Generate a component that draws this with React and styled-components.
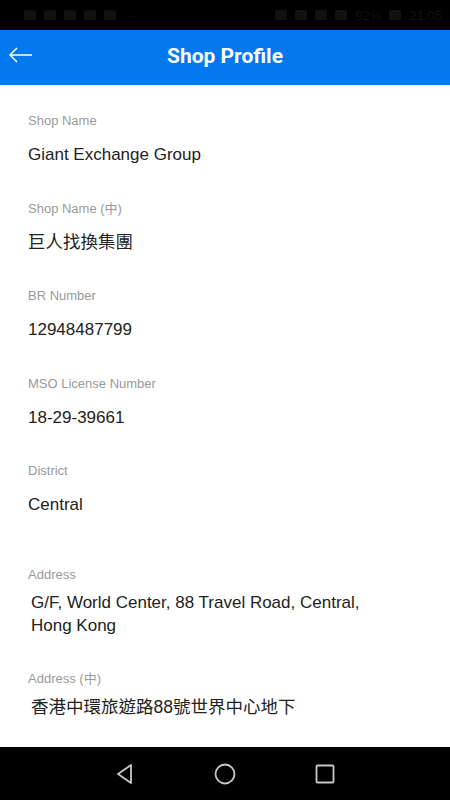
import styled, { createGlobalStyle } from "styled-components";

const fields = [
  { label: "Shop Name", value: "Giant Exchange Group" },
  { label: "Shop Name (中)", value: "巨人找換集團", cjk: true },
  { label: "BR Number", value: "12948487799" },
  { label: "MSO License Number", value: "18-29-39661" },
  { label: "District", value: "Central" },
];

const GlobalStyle = createGlobalStyle`
  html, body {
    margin: 0;
    padding: 0;
    background: #fff;
  }
  * {
    box-sizing: border-box;
  }
  body {
    font-family: "Liberation Sans", "Noto Sans CJK TC", sans-serif;
  }
`;

const Screen = styled.div`
  width: 450px;
  height: 800px;
  display: flex;
  flex-direction: column;
  background: #fff;
  overflow: hidden;
`;

const StatusBar = styled.div`
  height: 30px;
  background: #000;
  display: flex;
  align-items: center;
  justify-content: space-between;
  padding: 0 8px 0 24px;
  color: #121212;
  font-size: 13px;
`;

const StatusGroup = styled.div`
  display: flex;
  align-items: center;
  gap: 8px;
`;

const Dot = styled.span`
  width: 12px;
  height: 10px;
  background: #111;
  border-radius: 2px;
`;

const Header = styled.header`
  height: 55px;
  background: #0278ee;
  display: flex;
  align-items: center;
  justify-content: center;
  padding-bottom: 4px;
  position: relative;
`;

const BackBtn = styled.button`
  position: absolute;
  left: 8px;
  top: 15px;
  background: none;
  border: none;
  padding: 0;
  display: flex;
`;

const Title = styled.h1`
  margin: 0;
  color: #fff;
  font-size: 21px;
  font-weight: 700;
  font-family: Roboto, "Noto Sans", sans-serif;
`;

const Content = styled.main`
  flex: 1;
  padding: 0 28px;
  display: flex;
  flex-direction: column;
`;

const Field = styled.div`
  display: flex;
  flex-direction: column;
  padding-top: ${(p) => p.$top}px;
`;

const Label = styled.span`
  font-size: 13px;
  color: #9a9a9a;
  line-height: 18px;
`;

const Value = styled.span`
  margin-top: ${(p) => p.$gap || 13}px;
  font-size: ${(p) => (p.$cjk ? 17.5 : 17)}px;
  color: #222;
  line-height: 23px;
  padding-left: ${(p) => p.$indent || 0}px;
`;

const NavBar = styled.nav`
  height: 53px;
  background: #000;
  display: flex;
  align-items: center;
  justify-content: center;
  gap: 79px;
`;

const Arrow = () => (
  <svg width="26" height="20" viewBox="0 0 26 20" fill="none">
    <path d="M2 10H24M9 3L2 10L9 17" stroke="#fff" strokeWidth="1.6" />
  </svg>
);

const App = () => (
  <>
    <GlobalStyle />
    <Screen>
      <StatusBar>
        <StatusGroup>
          <Dot />
          <Dot />
          <Dot />
          <Dot />
          <Dot />
          <span>···</span>
        </StatusGroup>
        <StatusGroup>
          <Dot />
          <Dot />
          <Dot />
          <Dot />
          <span>92%</span>
          <Dot />
          <span>21:05</span>
        </StatusGroup>
      </StatusBar>
      <Header>
        <BackBtn>
          <Arrow />
        </BackBtn>
        <Title>Shop Profile</Title>
      </Header>
      <Content>
        {fields.map((f, i) => (
          <Field key={i} $top={i === 0 ? 27 : 33.5}>
            <Label>{f.label}</Label>
            <Value $cjk={f.cjk}>{f.value}</Value>
          </Field>
        ))}
        <Field $top={50}>
          <Label>Address</Label>
          <Value $gap={7} $indent={3}>
            G/F, World Center, 88 Travel Road, Central,
            <br />
            Hong Kong
          </Value>
        </Field>
        <Field $top={33}>
          <Label>Address (中)</Label>
          <Value $gap={8} $indent={3} $cjk>
            香港中環旅遊路88號世界中心地下
          </Value>
        </Field>
      </Content>
      <NavBar>
        <svg width="20" height="22" viewBox="0 0 20 22" fill="none">
          <path d="M16 2L3 11L16 20Z" stroke="#c8c8c8" strokeWidth="1.8" strokeLinejoin="round" />
        </svg>
        <svg width="22" height="22" viewBox="0 0 22 22" fill="none">
          <circle cx="11" cy="11" r="9.5" stroke="#c8c8c8" strokeWidth="1.8" />
        </svg>
        <svg width="20" height="20" viewBox="0 0 20 20" fill="none">
          <rect x="1.5" y="1.5" width="17" height="17" rx="1" stroke="#c8c8c8" strokeWidth="1.8" />
        </svg>
      </NavBar>
    </Screen>
  </>
);

export default App;
